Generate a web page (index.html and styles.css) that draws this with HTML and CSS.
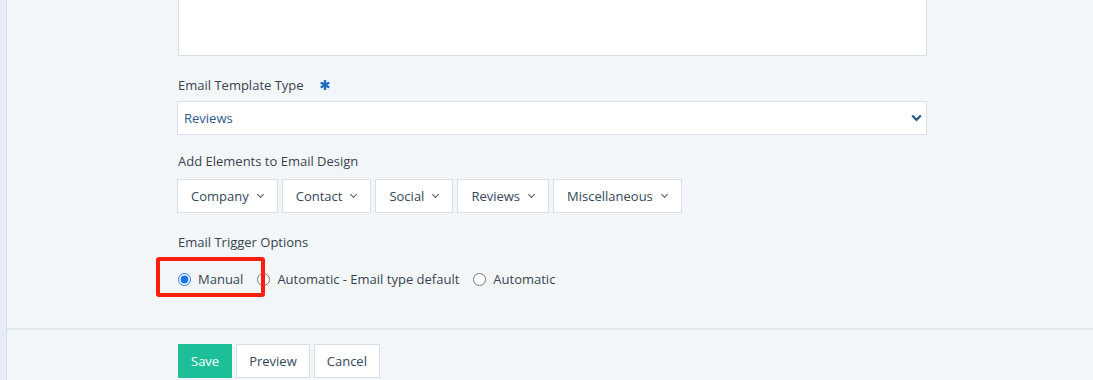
FILE: index.html
```html
<!DOCTYPE html>
<html lang="en">
<head>
    <meta charset="UTF-8" />
    <title>Email Template</title>
    <link rel="stylesheet" href="styles.css">
</head>
<body>
<div class="layout">
    <div class="side-strip"></div>
    <div class="page">
        <div class="form-body">
            <div class="textarea-box"></div>

            <div class="field">
                <label class="field-label">Email Template Type
                    <svg class="required" width="10" height="10" viewBox="0 0 10 10">
                        <g fill="#1f6bc1">
                            <rect x="3.8" y="0" width="2.4" height="10" rx="0.6"/>
                            <rect x="3.8" y="0" width="2.4" height="10" rx="0.6" transform="rotate(60 5 5)"/>
                            <rect x="3.8" y="0" width="2.4" height="10" rx="0.6" transform="rotate(-60 5 5)"/>
                        </g>
                    </svg>
                </label>
                <div class="select-box">
                    <span>Reviews</span>
                    <svg width="11" height="8" viewBox="0 0 11 8"><path d="M1.2 1.5 L5.5 5.8 L9.8 1.5" fill="none" stroke="#2c5a8c" stroke-width="2.4"/></svg>
                </div>
            </div>

            <div class="field">
                <label class="field-label">Add Elements to Email Design</label>
                <div class="element-buttons">
                    <button class="drop-btn">Company <span class="caret"></span></button>
                    <button class="drop-btn">Contact <span class="caret"></span></button>
                    <button class="drop-btn">Social <span class="caret"></span></button>
                    <button class="drop-btn">Reviews <span class="caret"></span></button>
                    <button class="drop-btn">Miscellaneous <span class="caret"></span></button>
                </div>
            </div>

            <div class="field">
                <label class="field-label">Email Trigger Options</label>
                <div class="radio-row">
                    <label class="radio"><input type="radio" name="trigger" checked> Manual</label>
                    <label class="radio"><input type="radio" name="trigger"> Automatic - Email type default</label>
                    <label class="radio"><input type="radio" name="trigger"> Automatic</label>
                    <div class="highlight-box"></div>
                </div>
            </div>
        </div>

        <div class="form-footer">
            <button class="btn btn-save">Save</button>
            <button class="btn">Preview</button>
            <button class="btn">Cancel</button>
        </div>
    </div>
</div>
</body>
</html>
```

FILE: styles.css
```css
html, body { margin: 0; padding: 0; height: 100%; }
body {
    font-family: 'Open Sans', 'Liberation Sans', sans-serif;
    font-size: 13px; color: #3a4450;
    background: #f3f6f9; overflow: hidden;
}
.layout { display: flex; height: 100vh; }
.side-strip { width: 6px; flex-shrink: 0; background: #e6edf5; border-right: 1px solid #d6dee8; }
.page { flex: 1; }
.form-body { padding: 0 0 0 170px; width: 750px; }
.textarea-box { height: 55px; background: #fff; border: 1px solid #d7dfe8; border-top: none; margin-left: 1px; }
.field { margin-top: 20px; }
.field:nth-child(3) { margin-top: 17px; }
.field:nth-child(4) { margin-top: 20px; }
.field-label { display: flex; align-items: center; line-height: 18px; margin: 0 0 7px 1px; }
.required { margin-left: 16px; margin-top: -1px; }
.select-box {
    height: 32px; background: #fff; border: 1px solid #d7dfe8;
    display: flex; align-items: center; justify-content: space-between;
    padding: 0 4px 0 6px; color: #2c5a8c;
}
.element-buttons { display: flex; gap: 4px; margin-top: 9px; }
.drop-btn {
    height: 34px; padding: 0 13px; background: #fff; border: 1px solid #d7dfe8;
    font-family: inherit; font-size: 13px; color: #33475b; display: flex; align-items: center; gap: 8px;
}
.caret {
    width: 4px; height: 4px; border-right: 1px solid #4c5866; border-bottom: 1px solid #4c5866;
    transform: rotate(45deg); margin: -3px 1px 0 1px;
}
.radio-row { position: relative; display: flex; gap: 14px; margin-top: 19px; margin-left: 1px; }
.radio { display: flex; align-items: center; line-height: 18px; gap: 7px; }
.radio input { margin: 0; width: 13px; height: 13px; accent-color: #1a73e8; }
.highlight-box {
    position: absolute; left: -22px; top: -13px; width: 101px; height: 32px;
    border: 4px solid #ff1e0e; border-radius: 3px;
}
.form-footer { border-top: 2px solid #dfe6ee; margin-top: 40px; padding: 14px 0 0 170px; display: flex; gap: 4px; }
.btn {
    height: 34px; padding: 0 12px; background: #fff; border: 1px solid #d7dfe8;
    font-family: inherit; font-size: 13px; color: #33475b;
}
.btn-save { background: #1dbf99; border-color: #1dbf99; color: #fff; margin-left: 1px; }
```
